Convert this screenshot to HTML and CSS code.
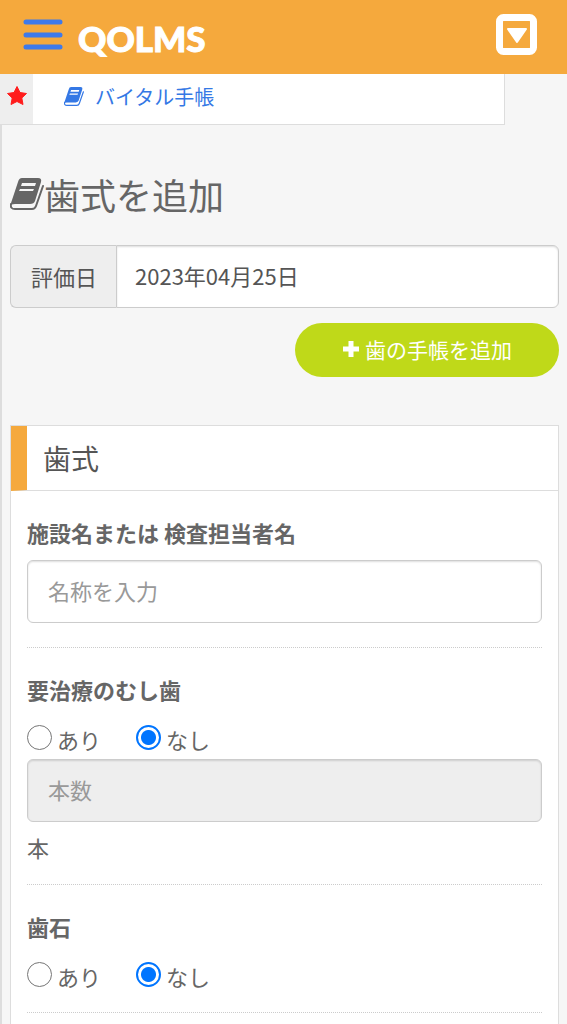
FILE: index.html
```html
<!DOCTYPE html>
<html lang="ja">
<head>
<meta charset="utf-8">
<meta name="viewport" content="width=device-width, initial-scale=1">
<title>歯式を追加 - QOLMS</title>
<link rel="stylesheet" href="styles.css">
</head>
<body>
<svg class="defs" aria-hidden="true">
  <symbol id="book" viewBox="0 0 34 32">
    <path fill="currentColor" fill-rule="evenodd" d="M12 0H28Q32 0 31 4L25 23Q24 26 20 26H5Q1 26 0 28L8 4Q9 0 12 0ZM12 5L11 8H25L26 5ZM10 11L9 13H23L24 11Z"/>
    <path fill="none" stroke="currentColor" stroke-width="2" stroke-linecap="round" stroke-linejoin="round" d="M1 26Q0 31 5 31H22Q25 31 26 28L33 8"/>
  </symbol>
</svg>
<header class="header">
  <button class="icon-button menu" type="button" aria-label="メニュー">
    <svg width="40" height="32" viewBox="0 0 40 32"><path fill="none" stroke="#3f7aea" stroke-width="5" stroke-linecap="round" d="M3 4H37M3 17H37M3 29H37"/></svg>
  </button>
  <a class="logo" href="#">QOLMS</a>
  <button class="icon-button toggle" type="button" aria-label="開く">
    <svg width="41" height="41" viewBox="0 0 41 41"><rect x="3.500" y="3.500" width="34" height="34" rx="4" fill="none" stroke="#fff" stroke-width="7"/><path fill="#fff" stroke="#fff" stroke-width="2" stroke-linejoin="round" d="M12 15H30L21 28Z"/></svg>
  </button>
</header>
<nav class="shortcuts">
  <span class="star"><svg width="22" height="22" viewBox="0 0 22 22"><path fill="#ff1c1c" stroke="#ff1c1c" stroke-linejoin="round" d="M11 1.500L14 7.500L20.500 8.500L15.800 13L17 19.500L11 16.500L5 19.500L6.200 13L1.500 8.500L8 7.500Z"/></svg></span>
  <a class="shortcut" href="#"><svg width="20" height="19"><use href="#book"/></svg>バイタル手帳</a>
</nav>
<main class="main">
  <h1 class="title"><svg width="34" height="32"><use href="#book"/></svg>歯式を追加</h1>
  <div class="date-group">
    <label class="addon" for="date">評価日</label>
    <input class="field date" id="date" type="text" value="2023年04月25日">
  </div>
  <button class="add" type="button"><svg width="18" height="18" viewBox="0 0 18 18"><path stroke="#fff" stroke-width="5" stroke-linejoin="round" d="M9 1V17M1 9H17"/></svg>歯の手帳を追加</button>
  <section class="panel">
    <h2 class="panel-title">歯式</h2>
    <div class="panel-body">
      <div class="group">
        <label class="caption" for="facility">施設名または 検査担当者名</label>
        <input class="field" id="facility" type="text" placeholder="名称を入力">
      </div>
      <fieldset class="group">
        <legend class="caption">要治療のむし歯</legend>
        <div class="choices">
          <label class="choice"><input class="radio" type="radio" name="caries">あり</label>
          <label class="choice"><input class="radio" type="radio" name="caries" checked>なし</label>
        </div>
        <input class="field" id="count" type="text" placeholder="本数" disabled>
        <label class="unit" for="count">本</label>
      </fieldset>
      <fieldset class="group">
        <legend class="caption">歯石</legend>
        <div class="choices">
          <label class="choice"><input class="radio" type="radio" name="tartar">あり</label>
          <label class="choice"><input class="radio" type="radio" name="tartar" checked>なし</label>
        </div>
      </fieldset>
    </div>
  </section>
</main>
</body>
</html>
```
FILE: styles.css
```css
* { box-sizing: border-box; }

body {
  margin: 0;
  min-height: 100vh;
  display: flex;
  flex-direction: column;
  background: #f6f6f6;
  color: #666;
  font: 22px/28px "Noto Sans CJK JP", sans-serif;
}

input, button { font: inherit; }
svg { display: block; flex: none; }
.defs { position: absolute; width: 0; height: 0; }

.header {
  display: flex;
  align-items: center;
  height: 74px;
  padding: 0 30px 6px 23px;
  background: #f5a93d;
}

.icon-button { padding: 0; border: 0; background: none; }

.logo {
  margin-left: 15px;
  padding-top: 8px;
  color: #fff;
  font: 900 35px/40px Lato, sans-serif;
  -webkit-text-stroke: 1px #fff;
  text-decoration: none;
}

.toggle { margin-left: auto; }

.shortcuts {
  display: flex;
  height: 51px;
  margin-right: 62px;
  background: #fff;
  border: solid #ddd;
  border-width: 0 1px 1px 0;
}

.star {
  display: flex;
  justify-content: center;
  width: 33px;
  padding-top: 11px;
  background: #eee;
}

.shortcut {
  display: flex;
  align-items: center;
  gap: 11px;
  padding: 0 31px 5px;
  color: #3478e5;
  font-size: 20px;
  text-decoration: none;
}

.main {
  flex: 1;
  display: flex;
  flex-direction: column;
  padding: 43px 8px 0;
  border-left: 2px solid #ddd;
}

.title {
  display: flex;
  align-items: center;
  margin: 0 0 25px;
  font-size: 36px;
  line-height: 52px;
  font-weight: 400;
}

.date-group { display: flex; }

.addon {
  flex: none;
  padding: 16px 19px 17px 20px;
  border: 1px solid #ccc;
  border-right: 0;
  border-radius: 6px 0 0 6px;
  background: #eee;
  color: #555;
}

.field {
  display: block;
  width: 100%;
  min-width: 0;
  height: 63px;
  padding: 0 20px 3px;
  border: 1px solid #ccc;
  border-radius: 6px;
  background: #fff;
  box-shadow: inset 0 1px 2px #0002;
  color: #555;
}

.field::placeholder { color: #999; opacity: 1; }
.field:disabled { background: #eee; }
.date { padding-left: 18px; border-radius: 0 6px 6px 0; }

.add {
  align-self: flex-end;
  display: flex;
  align-items: center;
  gap: 5px;
  height: 54px;
  margin: 15px 0 48px;
  padding: 0 47px 3px;
  border: 0;
  border-radius: 27px;
  background: #bfd919;
  color: #fff;
  font-size: 21px;
}

.panel {
  flex: 1;
  border: 1px solid #ddd;
  border-bottom: 0;
  background: #fff;
}

.panel-title {
  margin: 0;
  padding: 12px 16px;
  border-left: 16px solid #f5a93d;
  border-bottom: 1px solid #ddd;
  color: #555;
  font-size: 28px;
  line-height: 40px;
  font-weight: 400;
}

.panel-body { padding: 0 16px; }

.group {
  min-width: 0;
  margin: 0;
  padding: 0 0 16px;
  border: 0;
  border-bottom: 1px dotted #ccc;
}

.group:first-child { padding-bottom: 24px; }

.caption {
  display: block;
  padding: 27px 0 14px;
  font-weight: 700;
}

.choices {
  display: flex;
  gap: 35px;
  padding: 8px 0 6px;
}

.choice {
  display: flex;
  align-items: flex-start;
  gap: 5px;
}

.radio {
  appearance: none;
  width: 25px;
  height: 25px;
  margin: 0;
  border: 1px solid #767676;
  border-radius: 50%;
  background: #fff;
}

.radio:checked {
  border: 2px solid #0075ff;
  background: radial-gradient(circle, #0075ff 7px, #fff 8px);
}

.unit { display: block; padding: 11px 0 7px; }
```
